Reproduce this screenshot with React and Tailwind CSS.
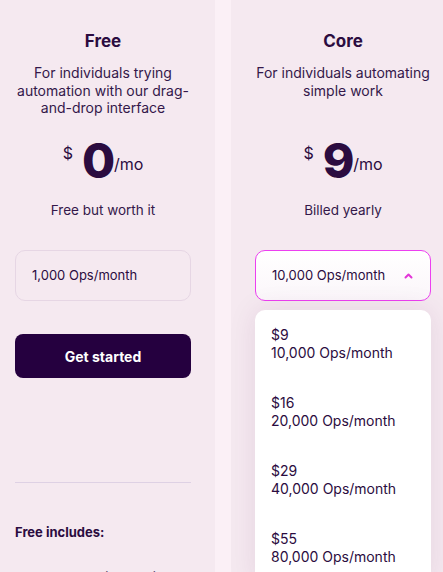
import { Check } from 'lucide-react';

const OPCOES = [
  { preco: '$9', ops: '10,000 Ops/month' },
  { preco: '$16', ops: '20,000 Ops/month' },
  { preco: '$29', ops: '40,000 Ops/month' },
  { preco: '$55', ops: '80,000 Ops/month' },
];

function Preco({ valor }) {
  return (
    <div className="mt-[20px] flex justify-center items-start text-[#2b0c40]">
      <span className="text-[16px] leading-none mt-[8px] mr-[9px]">$</span>
      <span className="text-[48px] leading-none font-extrabold tracking-tight">{valor}</span>
      <span className="text-[16px] leading-none mt-[19px]">/mo</span>
    </div>
  );
}

export default function App() {
  return (
    <div className="w-full h-[572px] overflow-hidden bg-[#fbf0f6]" style={{ fontFamily: 'Inter, "Noto Sans", sans-serif' }}>
      <div className="flex items-start gap-4 -ml-[9px]">
        {/* Free */}
        <div className="w-[224px] min-h-[640px] shrink-0 bg-[#f5e9f0] px-6 pt-[31px] flex flex-col text-center text-[#2b0c40]">
          <h2 className="text-[17px] leading-[20px] font-bold">Free</h2>
          <p className="mt-[13px] h-[53px] text-[14px] leading-[17.5px] text-[#34184a]">
            For individuals trying automation with our drag-and-drop interface
          </p>
          <Preco valor="0" />
          <p className="mt-[15px] text-[13.5px] leading-[20px] text-[#34184a]">Free but worth it</p>
          <div className="mt-[30px] h-[51px] rounded-[10px] border border-[#e6d6e4] flex items-center pl-4 text-[13px] text-left">
            1,000 Ops/month
          </div>
          <button className="mt-[33px] h-[44px] rounded-[8px] bg-[#25003f] text-white text-[14px] font-bold">
            Get started
          </button>
          <div className="mt-[104px] h-px bg-[#ded1e4]" />
          <div className="mt-[41px] text-left text-[13px] leading-[16px] font-bold">Free includes:</div>
          <div className="mt-[29px] flex items-start gap-[9px] text-left text-[13px] leading-[16px]">
            <Check size={12} strokeWidth={2.5} className="ml-[4px] mt-[2px]" />
            <span>No-code visual builder</span>
          </div>
        </div>

        {/* Core */}
        <div className="w-[224px] min-h-[640px] shrink-0 bg-[#f5e9f0] px-6 pt-[31px] flex flex-col text-center text-[#2b0c40]">
          <h2 className="text-[17px] leading-[20px] font-bold">Core</h2>
          <p className="mt-[13px] h-[53px] text-[14px] leading-[17.5px] text-[#34184a]">
            For individuals automating simple work
          </p>
          <Preco valor="9" />
          <p className="mt-[15px] text-[13.5px] leading-[20px] text-[#34184a]">Billed yearly</p>
          <div className="mt-[30px] h-[51px] rounded-[10px] border border-[#ec3ff0] bg-gradient-to-b from-white to-[#fbf6fa] flex items-center justify-between pl-4 pr-[17px] text-[13px] text-left">
            <span>10,000 Ops/month</span>
            <svg width="9" height="6" viewBox="0 0 9 6" fill="none">
              <path d="M1.5 4.5L4.5 1.5L7.5 4.5" stroke="#e236d8" strokeWidth="2" strokeLinecap="round" strokeLinejoin="round" />
            </svg>
          </div>
          <div className="mt-[9px] bg-white rounded-t-[10px] shadow-[0_0_28px_rgba(90,30,90,0.10)] text-left">
            {OPCOES.map(o => (
              <div key={o.preco} className="px-4 py-4 text-[14px] leading-[18px]">
                <div>{o.preco}</div>
                <div>{o.ops}</div>
              </div>
            ))}
          </div>
        </div>
      </div>
    </div>
  );
}
